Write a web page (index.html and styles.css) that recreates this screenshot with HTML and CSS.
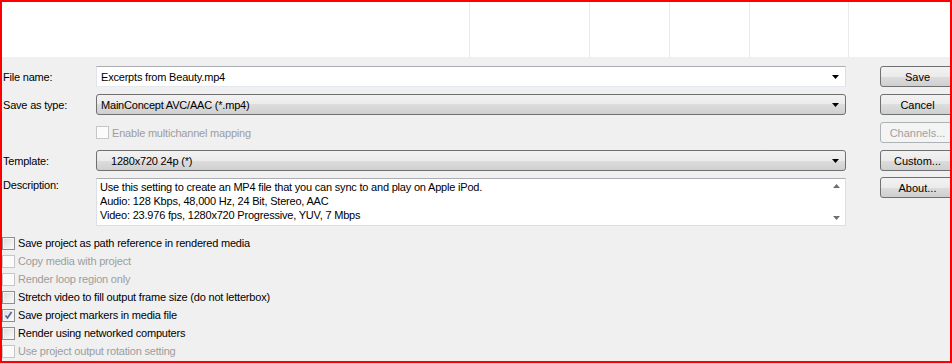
FILE: index.html
```html
<!DOCTYPE html>
<html>
<head>
    <title>Render As</title>
    <link rel="stylesheet" href="styles.css">
</head>
<body>
<div class="frame">
    <div class="file-list">
        <div class="col" style="width: 468px"></div>
        <div class="col" style="width: 120px"></div>
        <div class="col" style="width: 80px"></div>
        <div class="col" style="width: 80px"></div>
        <div class="col" style="width: 99px"></div>
        <div class="col last"></div>
    </div>

    <div class="form">
        <div class="fields">
            <label class="lbl">File name:</label>
            <div class="combo edit">
                <span class="value">Excerpts from Beauty.mp4</span>
                <svg class="arrow" width="7" height="4" viewBox="0 0 7 4"><path d="M0 0h7L3.5 4z"/></svg>
            </div>
            <button class="btn">Save</button>

            <label class="lbl">Save as type:</label>
            <div class="combo">
                <span class="value">MainConcept AVC/AAC (*.mp4)</span>
                <svg class="arrow" width="7" height="4" viewBox="0 0 7 4"><path d="M0 0h7L3.5 4z"/></svg>
            </div>
            <button class="btn">Cancel</button>

            <span></span>
            <div class="check disabled inline">
                <span class="box"></span>
                <span>Enable multichannel mapping</span>
            </div>
            <button class="btn" disabled>Channels...</button>

            <label class="lbl">Template:</label>
            <div class="combo">
                <span class="value indent">1280x720 24p (*)</span>
                <svg class="arrow" width="7" height="4" viewBox="0 0 7 4"><path d="M0 0h7L3.5 4z"/></svg>
            </div>
            <button class="btn">Custom...</button>

            <label class="lbl top">Description:</label>
            <div class="desc">
                <div class="desc-text">
                    Use this setting to create an MP4 file that you can sync to and play on Apple iPod.<br>
                    Audio: 128 Kbps, 48,000 Hz, 24 Bit, Stereo, AAC<br>
                    Video: 23.976 fps, 1280x720 Progressive, YUV, 7 Mbps
                </div>
                <div class="scroll">
                    <svg width="7" height="4" viewBox="0 0 7 4"><path d="M3.5 0L7 4H0z"/></svg>
                    <svg width="7" height="4" viewBox="0 0 7 4"><path d="M0 0h7L3.5 4z"/></svg>
                </div>
            </div>
            <button class="btn top">About...</button>
        </div>

        <div class="options">
            <div class="check"><span class="box"></span><span>Save project as path reference in rendered media</span></div>
            <div class="check disabled"><span class="box"></span><span>Copy media with project</span></div>
            <div class="check disabled"><span class="box"></span><span>Render loop region only</span></div>
            <div class="check"><span class="box"></span><span>Stretch video to fill output frame size (do not letterbox)</span></div>
            <div class="check">
                <span class="box checked">
                    <svg width="9" height="9" viewBox="0 0 9 9"><path d="M1.5 4.5l2 2.5 4-6" fill="none" stroke="#4a5f9a" stroke-width="1.6"/></svg>
                </span>
                <span>Save project markers in media file</span>
            </div>
            <div class="check"><span class="box"></span><span>Render using networked computers</span></div>
            <div class="check disabled"><span class="box"></span><span>Use project output rotation setting</span></div>
        </div>
    </div>
</div>
</body>
</html>
```

FILE: styles.css
```css
body {
    margin: 0;
    padding: 0;
    font-family: "Liberation Sans", Arial, sans-serif;
    font-size: 11px;
    letter-spacing: -0.2px;
    color: #000;
}

.frame {
    width: 952px;
    height: 363px;
    box-sizing: border-box;
    border: 2px solid #f00;
    background-color: #f0f0f0;
    overflow: hidden;
}

/* list view columns at the top */
.file-list {
    display: flex;
    height: 55px;
    background-color: #fff;
}

.col {
    flex: none;
    border-right: 1px solid #e9e9e9;
    box-sizing: border-box;
}

.col.last {
    flex: 1;
    border-right: none;
}

.form {
    padding-top: 9px;
}

.fields {
    display: grid;
    grid-template-columns: 94px 750px 109px;
    grid-template-rows: 21px 21px 21px 21px 48px;
    row-gap: 7px;
    align-items: center;
}

.lbl {
    padding-left: 1px;
}

.lbl.top {
    align-self: start;
    padding-top: 1px;
}

.combo {
    height: 21px;
    box-sizing: border-box;
    display: flex;
    align-items: center;
    justify-content: space-between;
    padding: 0 6px 0 4px;
    border: 1px solid #707070;
    border-radius: 3px;
    background: linear-gradient(#f2f2f2, #ebebeb 50%, #dddddd 50%, #cfcfcf);
}

.combo.edit {
    border-color: #abadb3 #dbdfe6 #e3e9ef #e2e3ea;
    border-radius: 0;
    background: #fff;
}

.value.indent {
    padding-left: 10px;
}

.arrow {
    fill: #000;
}

.btn {
    width: 75px;
    height: 21px;
    margin-left: 34px;
    padding: 0;
    font: inherit;
    color: #000;
    border: 1px solid #707070;
    border-radius: 3px;
    background: linear-gradient(#f2f2f2, #ebebeb 50%, #dddddd 50%, #cfcfcf);
}

.btn[disabled] {
    color: #a0a0a0;
    border-color: #adb2b5;
    background: #f4f4f4;
}

.btn.top {
    align-self: start;
    margin-top: -1px;
}

.desc {
    height: 48px;
    box-sizing: border-box;
    display: flex;
    justify-content: space-between;
    border: 1px solid #dcdfe6;
    border-top-color: #abadb3;
    background-color: #fff;
}

.desc-text {
    padding: 1px 3px;
    line-height: 14px;
}

.scroll {
    display: flex;
    flex-direction: column;
    justify-content: space-between;
    padding: 5px 5px 5px 0;
    fill: #707070;
}

.options {
    margin-top: 8px;
}

.check {
    height: 18px;
    display: flex;
    align-items: center;
    gap: 3px;
}

.check.inline {
    height: 21px;
}

.box {
    width: 13px;
    height: 13px;
    box-sizing: border-box;
    display: flex;
    align-items: center;
    justify-content: center;
    border: 1px solid #8e8f8f;
    background: linear-gradient(135deg, #dcdcdc, #fbfbfb);
    box-shadow: inset 0 0 0 1px #f4f4f4;
}

.check.disabled {
    color: #9d9d9d;
}

.check.disabled .box {
    border-color: #c6c6c6;
    background: #fbfbfb;
    box-shadow: none;
}
```
